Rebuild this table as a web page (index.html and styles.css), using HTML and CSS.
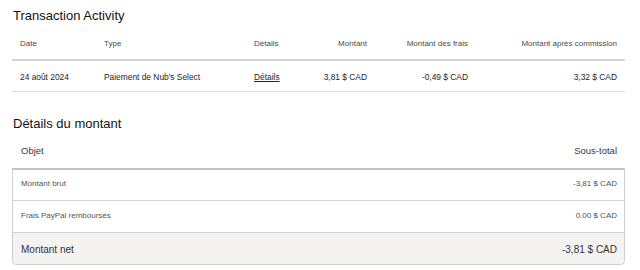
FILE: index.html
```html
<!DOCTYPE html>
<html lang="fr">
<head>
<meta charset="utf-8">
<title>Transaction Activity</title>
<link rel="stylesheet" href="styles.css">
</head>
<body>
<main class="page">
  <section class="activity">
    <h2 class="title">Transaction Activity</h2>
    <div class="tx-table">
      <div class="tx-row tx-head">
        <div class="cell">Date</div>
        <div class="cell">Type</div>
        <div class="cell">Détails</div>
        <div class="cell num">Montant</div>
        <div class="cell num">Montant des frais</div>
        <div class="cell num">Montant après commission</div>
      </div>
      <div class="tx-row tx-data">
        <div class="cell">24 août 2024</div>
        <div class="cell">Paiement de Nub's Select</div>
        <div class="cell"><a class="link" href="#">Détails</a></div>
        <div class="cell num">3,81 $ CAD</div>
        <div class="cell num">-0,49 $ CAD</div>
        <div class="cell num">3,32 $ CAD</div>
      </div>
    </div>
  </section>

  <section class="amount">
    <h2 class="title title-2">Détails du montant</h2>
    <div class="amt-head">
      <span>Objet</span>
      <span>Sous-total</span>
    </div>
    <div class="amt-box">
      <div class="amt-row amt-first">
        <span>Montant brut</span>
        <span class="val">-3,81 $ CAD</span>
      </div>
      <div class="amt-row">
        <span>Frais PayPal remboursés</span>
        <span class="val">0.00 $ CAD</span>
      </div>
      <div class="amt-row amt-total">
        <span>Montant net</span>
        <span class="val">-3,81 $ CAD</span>
      </div>
    </div>
  </section>
</main>
</body>
</html>
```

FILE: styles.css
```css
* { box-sizing: border-box; }

html, body {
  margin: 0;
  padding: 0;
  background: #ffffff;
}

body {
  font-family: "Liberation Sans", Arial, sans-serif;
  color: #2c2e2f;
}

.page {
  width: 613px;
  margin-left: 12px;
  padding-top: 8px;
}

.title {
  margin: 0;
  font-size: 13px;
  line-height: 16px;
  font-weight: 400;
  color: #141414;
  padding-left: 1px;
}

.tx-table {
  display: flex;
  flex-direction: column;
}

.tx-row {
  display: grid;
  grid-template-columns: 84px 150px 54px 75px 101px 149px;
  font-size: 8px;
  line-height: 12px;
}

.tx-row .cell {
  padding: 0 8px;
  white-space: nowrap;
}

.tx-row .num { text-align: right; }

.tx-head {
  padding: 14px 0 9px;
  border-bottom: 2px solid #d4d4d4;
  color: #4a4a4a;
}

.tx-data {
  padding: 10px 0 8px;
  border-bottom: 1px solid #dcdcdc;
  color: #262626;
  font-size: 8.4px;
}

.link {
  color: #262626;
  text-decoration: underline;
}

.title-2 {
  margin-top: 24px;
}

.amt-head {
  display: flex;
  justify-content: space-between;
  padding: 12px 8px 10px 9px;
  font-size: 9.5px;
  line-height: 14px;
  color: #3a3a3a;
}

.amt-box {
  display: flex;
  flex-direction: column;
  border: 1px solid #cfcfcf;
  border-top: 2px solid #c4c4c4;
  border-radius: 0 0 5px 5px;
  overflow: hidden;
  box-shadow: 0 1px 1px rgba(0, 0, 0, 0.06);
}

.amt-row {
  display: flex;
  justify-content: space-between;
  padding: 9px 7px 10px 8px;
  font-size: 8px;
  line-height: 12px;
  color: #555555;
  border-bottom: 1px solid #d6d6d6;
}

.amt-first {
  padding-top: 8px;
}

.amt-row .val {
  color: #4c5260;
}

.amt-total {
  border-bottom: none;
  background: #f4f3f1;
  padding: 10px 7px 7px 8px;
  font-size: 10px;
  line-height: 14px;
  color: #333333;
}

.amt-total .val {
  color: #333333;
}
```
